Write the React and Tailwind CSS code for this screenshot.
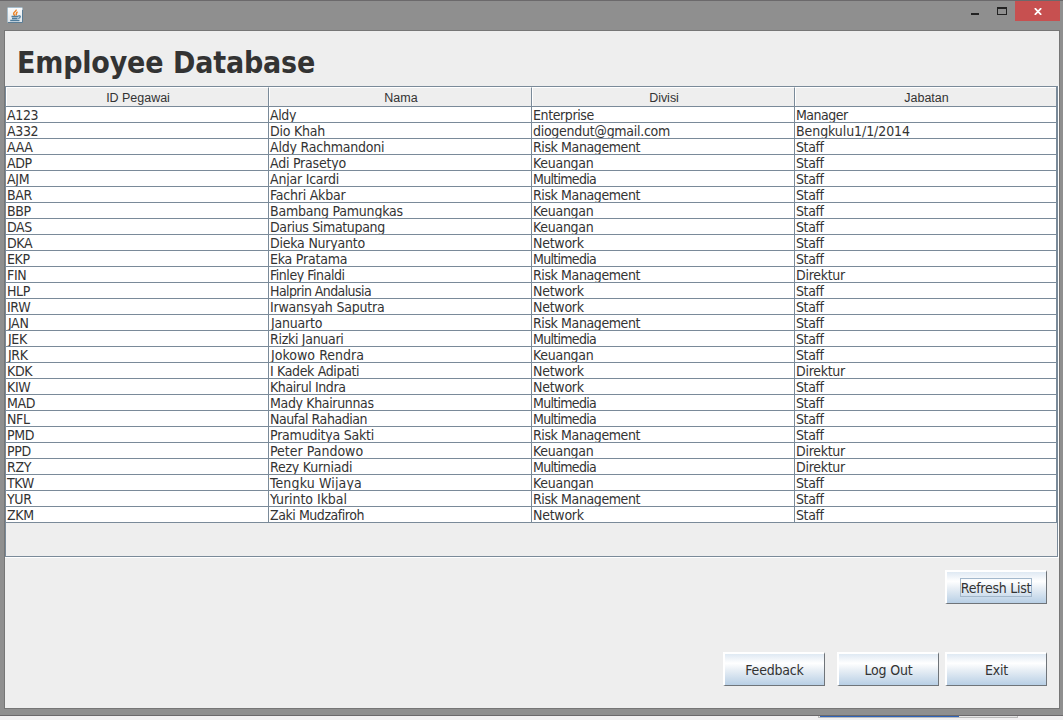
const COLUMNS = ["ID Pegawai", "Nama", "Divisi", "Jabatan"];

const ROWS = [
  ["A123", "Aldy", "Enterprise", "Manager"],
  ["A332", "Dio Khah", "diogendut@gmail.com", "Bengkulu1/1/2014"],
  ["AAA", "Aldy Rachmandoni", "Risk Management", "Staff"],
  ["ADP", "Adi Prasetyo", "Keuangan", "Staff"],
  ["AJM", "Anjar Icardi", "Multimedia", "Staff"],
  ["BAR", "Fachri Akbar", "Risk Management", "Staff"],
  ["BBP", "Bambang Pamungkas", "Keuangan", "Staff"],
  ["DAS", "Darius Simatupang", "Keuangan", "Staff"],
  ["DKA", "Dieka Nuryanto", "Network", "Staff"],
  ["EKP", "Eka Pratama", "Multimedia", "Staff"],
  ["FIN", "Finley Finaldi", "Risk Management", "Direktur"],
  ["HLP", "Halprin Andalusia", "Network", "Staff"],
  ["IRW", "Irwansyah Saputra", "Network", "Staff"],
  ["JAN", "Januarto", "Risk Management", "Staff"],
  ["JEK", "Rizki Januari", "Multimedia", "Staff"],
  ["JRK", "Jokowo Rendra", "Keuangan", "Staff"],
  ["KDK", "I Kadek Adipati", "Network", "Direktur"],
  ["KIW", "Khairul Indra", "Network", "Staff"],
  ["MAD", "Mady Khairunnas", "Multimedia", "Staff"],
  ["NFL", "Naufal Rahadian", "Multimedia", "Staff"],
  ["PMD", "Pramuditya Sakti", "Risk Management", "Staff"],
  ["PPD", "Peter Pandowo", "Keuangan", "Direktur"],
  ["RZY", "Rezy Kurniadi", "Multimedia", "Direktur"],
  ["TKW", "Tengku Wijaya", "Keuangan", "Staff"],
  ["YUR", "Yurinto Ikbal", "Risk Management", "Staff"],
  ["ZKM", "Zaki Mudzafiroh", "Network", "Staff"],
];

const COLUMN_TRACKING = [
  "tracking-[-0.35px]",
  "tracking-[-0.22px]",
  "tracking-[-0.4px]",
  "tracking-[-0.4px]",
];

const TEXT_TRACKING = {
  Multimedia: "tracking-[-0.7px]",
  Keuangan: "tracking-[-0.28px]",
  Network: "tracking-[-0.25px]",
  Direktur: "tracking-[-0.28px]",
  Manager: "tracking-[-0.5px]",
  "diogendut@gmail.com": "tracking-[-0.28px]",
  "Bengkulu1/1/2014": "tracking-[-0.08px]",
  "Halprin Andalusia": "tracking-[-0.58px]",
  "Darius Simatupang": "tracking-[-0.35px]",
  "Naufal Rahadian": "tracking-[-0.45px]",
  "Finley Finaldi": "tracking-[-0.45px]",
  "Zaki Mudzafiroh": "tracking-[-0.45px]",
  "Khairul Indra": "tracking-[-0.4px]",
  "Rizki Januari": "tracking-[-0.3px]",
  "Yurinto Ikbal": "tracking-[-0.05px]",
  "Tengku Wijaya": "tracking-[0.15px]",
  "Jokowo Rendra": "tracking-[0.03px]",
  "Peter Pandowo": "tracking-[0px]",
  "Mady Khairunnas": "tracking-[-0.35px]",
  "I Kadek Adipati": "tracking-[-0.35px]",
  Aldy: "tracking-[-0.4px]",
};

function JavaIcon() {
  return (
    <svg width="16" height="16" viewBox="0 0 16 16" className="block">
      <defs>
        <linearGradient id="tile" x1="0" y1="0" x2="0" y2="1">
          <stop offset="0" stopColor="#fbfcfd" />
          <stop offset="1" stopColor="#dfe5ea" />
        </linearGradient>
      </defs>
      <rect x="0.5" y="0.5" width="15" height="15" rx="1" fill="url(#tile)" stroke="#a5bccb" />
      <path d="M1 15.5H15.5V3" fill="none" stroke="#5a7d96" />
      <path d="M9.2 2.6C9.4 4.6 6.2 5 6.6 6.8C6.8 7.6 7.6 7.9 7.6 8.9M10.6 4.9C8.6 5.6 10 6.9 8.9 8.4" fill="none" stroke="#ec8427" strokeWidth="1.5" />
      <path d="M4.5 9.5H11M5 11.5H10.5M3.2 13.5H12.5M11 9.2C14 7.8 14 11 11.2 11.4" fill="none" stroke="#4f7c9c" strokeWidth="1.3" />
    </svg>
  );
}

function Button({ children, focused = false }) {
  return (
    <button className="flex h-[34px] w-[102px] items-center justify-center border-t-2 border-r border-b border-l-2 border-t-white border-r-[#6f7479] border-b-[#6f7479] border-l-white bg-[linear-gradient(180deg,#dfe9f3_0%,#ffffff_30%,#eaf0f6_50%,#b8cfe5_100%)] text-[14px] tracking-[-0.2px]">
      <span
        className={
          focused
            ? "mr-px flex h-[19px] w-[72px] items-center justify-center border border-[#a3b8cc] pt-[2px] tracking-[-0.25px] whitespace-nowrap"
            : "pt-[2px] whitespace-nowrap"
        }
      >
        {children}
      </span>
    </button>
  );
}

function TitleBar() {
  return (
    <header className="flex h-[29px] shrink-0 justify-between pr-[3px] pl-[7px]">
      <div className="pt-[6px]">
        <JavaIcon />
      </div>
      <div className="flex">
        <svg width="45" height="20" viewBox="0 0 45 20" shapeRendering="crispEdges">
          <rect x="1" y="12" width="8" height="2" fill="#222" />
          <path d="M27 6H37V14H27ZM28 8V13H36V8Z" fill="#222" fillRule="evenodd" />
        </svg>
        <div className="flex h-[20px] w-[45px] items-center justify-center bg-[#c75050]">
          <svg width="8" height="7" viewBox="0 0 8 7" className="mt-px">
            <path d="M0.8 0.2L7.2 6.8M7.2 0.2L0.8 6.8" stroke="#fff" strokeWidth="1.8" />
          </svg>
        </div>
      </div>
    </header>
  );
}

function EmployeeTable() {
  return (
    <div className="flex h-[472px] shrink-0 flex-col border-r border-b border-white">
      <div className="flex h-full flex-col border border-[#7a8a99]">
        <div className="flex h-[20px] shrink-0 border-r border-b border-[#7a8a99]">
          {COLUMNS.map((name, i) => (
            <div
              key={name}
              className={`flex items-center justify-center border-t border-l border-t-white border-l-white pt-[3px] pl-px font-['Liberation_Sans',Arial,sans-serif] text-[12.5px] tracking-[-0.02px] ${
                i < 3 ? "w-[263px] border-r border-r-[#7a8a99]" : "flex-1"
              }`}
            >
              {name}
            </div>
          ))}
        </div>
        {ROWS.map((row) => (
          <div key={row[0]} className="flex h-[16px] shrink-0 border-r border-b border-[#7a8a99] bg-white">
            {row.map((cell, i) => (
              <div
                key={i}
                className={`overflow-hidden text-[14px] leading-[17px] whitespace-nowrap ${
                  cell.startsWith("J") ? "pl-[2px]" : "pl-px"
                } ${TEXT_TRACKING[cell] ?? COLUMN_TRACKING[i]} ${
                  i < 3 ? "w-[263px] border-r border-[#7a8a99]" : "flex-1"
                }`}
              >
                {cell}
              </div>
            ))}
          </div>
        ))}
      </div>
    </div>
  );
}

export default function App() {
  return (
    <div className="flex h-[720px] w-[1063px] flex-col overflow-hidden bg-[#f2f1f2] font-['DejaVu_Sans_Condensed','DejaVu_Sans',sans-serif] [font-stretch:condensed] text-[#333]">
      <div className="flex h-[716px] shrink-0 flex-col border-t border-b border-[#6b696b] bg-[#8f8f8f]">
        <TitleBar />
        <main className="mr-[3px] ml-[4px] flex h-[679px] shrink-0 flex-col border border-[#767676] bg-[#eeeeee]">
          <h1 className="h-[55px] shrink-0 pt-[12px] pl-[12px] text-[30px] leading-[40px] font-bold tracking-[-0.2px] whitespace-nowrap [word-spacing:0.5px]">
            Employee Database
          </h1>
          <EmployeeTable />
          <div className="mt-[12px] flex justify-end pr-[12px]">
            <Button focused>Refresh List</Button>
          </div>
          <div className="mt-[48px] flex justify-end pr-[12px]">
            <Button>Feedback</Button>
            <div className="mr-[6px] ml-[12px]">
              <Button>Log Out</Button>
            </div>
            <Button>Exit</Button>
          </div>
        </main>
      </div>
      <div className="ml-[818px] h-[2px] w-[200px] border-r border-b border-l border-[#bbbbbb] bg-[#e6e6e6] pl-px">
        <div className="h-px w-[139px] bg-[#2f63b8]" />
      </div>
    </div>
  );
}
